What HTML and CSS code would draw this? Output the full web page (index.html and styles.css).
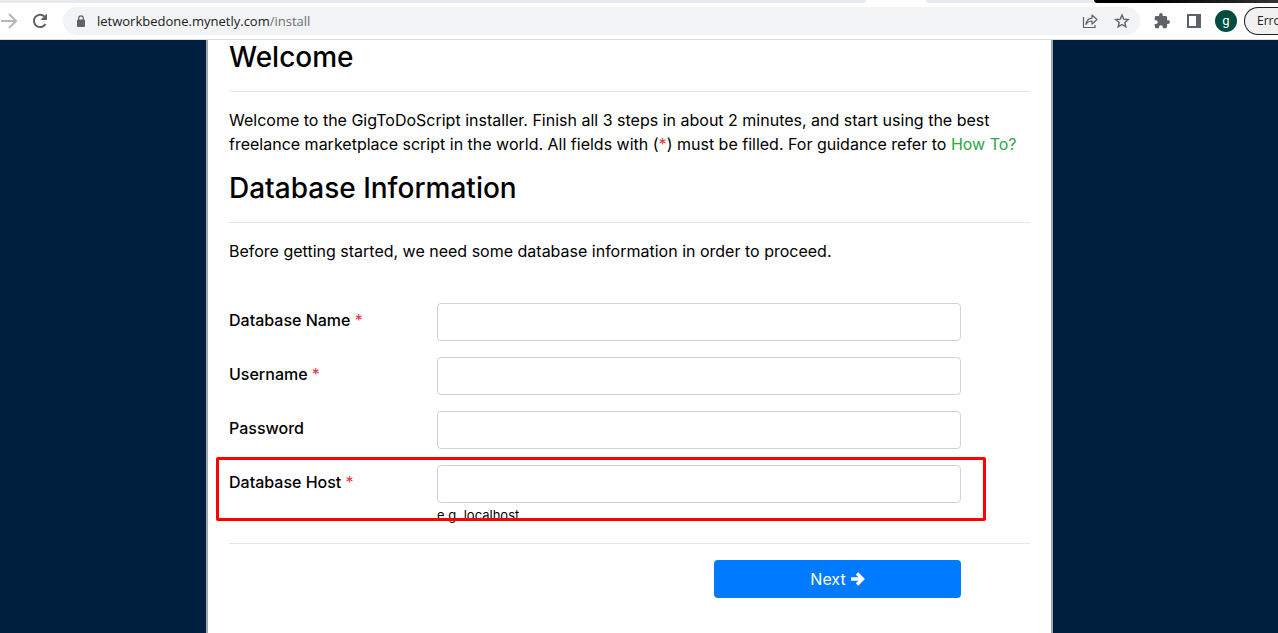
FILE: index.html
```html
<!DOCTYPE html>
<html lang="en">
<head>
<meta charset="utf-8">
<title>Install</title>
<link rel="stylesheet" href="styles.css">
</head>
<body>
<header class="browser">
  <div class="tabs"><span class="tab tab-before"></span><span class="tab tab-active"></span><span class="tab tab-after"></span><span class="tab-backdrop"></span></div>
  <div class="toolbar">
    <button class="icon-btn forward" type="button" aria-label="Forward"><svg width="16" height="16" viewBox="0 0 16 16" fill="none" stroke="#b5b7ba" stroke-width="2"><path d="M0 8h14M8 1l7 7-7 7"/></svg></button>
    <button class="icon-btn reload" type="button" aria-label="Reload"><svg width="16" height="16" viewBox="0 0 16 16"><path d="M13.500 11A6.200 6.200 0 1 1 12.600 3.600" fill="none" stroke="#5f6368" stroke-width="2"/><path d="M15 .5v6.500H8.500z" fill="#5f6368"/></svg></button>
    <div class="address">
      <svg class="lock" width="10" height="13" viewBox="0 0 10 13"><rect x="1" y="4.500" width="8" height="7.500" rx="1" fill="#5f6368"/><path d="M2.700 5V3.200a2.300 2.300 0 0 1 4.600 0V5" fill="none" stroke="#5f6368" stroke-width="1.200"/></svg>
      <a class="url" href="#">letworkbedone.mynetly.com<span class="path">/install</span></a>
      <button class="icon-btn" type="button" aria-label="Share"><svg width="16" height="16" viewBox="0 0 16 16" fill="none" stroke="#5f6368" stroke-width="1.200"><path d="M1.500 4v10.500h11.500V12"/><path d="M4 11.500C4.500 7.500 6.500 5.500 10 5.200V2l5 4.500-5 4.500V8C7.500 8 5.500 9 4 11.500z" stroke-linejoin="round"/></svg></button>
      <button class="icon-btn" type="button" aria-label="Bookmark"><svg width="16" height="16" viewBox="0 0 16 16" fill="none" stroke="#5f6368" stroke-width="1.400"><path d="M8 2l1.700 4.100 4.500.4-3.400 2.900 1 4.400L8 11.500l-3.800 2.300 1-4.400-3.400-2.900 4.500-.4z"/></svg></button>
    </div>
    <button class="icon-btn" type="button" aria-label="Extensions"><svg width="16" height="16" viewBox="1 1 22 22"><path fill="#5f6368" d="M20.500 11H19V7a2 2 0 0 0-2-2h-4V3.500a2.500 2.500 0 0 0-5 0V5H4a2 2 0 0 0-2 2v3.800h1.500a2.700 2.700 0 0 1 0 5.400H2V20a2 2 0 0 0 2 2h3.800v-1.500a2.700 2.700 0 0 1 5.400 0V22H17a2 2 0 0 0 2-2v-4h1.500a2.500 2.500 0 0 0 0-5z"/></svg></button>
    <button class="icon-btn" type="button" aria-label="Side panel"><svg width="14" height="14" viewBox="0 0 14 14"><path fill="#5f6368" fill-rule="evenodd" d="M0 0h14v14H0zM2 2v10h7V2z"/></svg></button>
    <button class="avatar" type="button">g</button>
    <button class="error" type="button">Error</button>
  </div>
</header>
<main class="page">
  <section class="card">
    <h3>Welcome</h3>
    <hr>
    <p>Welcome to the GigToDoScript installer. Finish all 3 steps in about 2 minutes, and start using the best freelance marketplace script in the world. All fields with (<span class="required">*</span>) must be filled. For guidance refer to <a class="how" href="#">How To?</a></p>
    <h3>Database Information</h3>
    <hr>
    <p class="lead">Before getting started, we need some database information in order to proceed.</p>
    <form>
      <div class="row"><label for="name">Database Name <span class="required">*</span></label><input id="name" type="text"></div>
      <div class="row"><label for="user">Username <span class="required">*</span></label><input id="user" type="text"></div>
      <div class="row"><label for="pass">Password</label><input id="pass" type="password"></div>
      <div class="row host"><label for="host">Database Host <span class="required">*</span></label><input id="host" type="text"><small>e.g. localhost</small><span class="highlight"></span></div>
      <hr>
      <div class="actions"><button class="next" type="submit">Next <svg width="14" height="14" viewBox="0 0 14 14"><path d="M0 7h10M6 1.500L11.500 7 6 12.500" fill="none" stroke="#fff" stroke-width="3.400"/></svg></button></div>
    </form>
  </section>
</main>
</body>
</html>
```
FILE: styles.css
```css
* { box-sizing: border-box; }
body {
  margin: 0;
  height: 100vh;
  display: flex;
  flex-direction: column;
  overflow: hidden;
  background: #001f3f;
  color: #000;
  font: 16px/24px Inter, "Liberation Sans", sans-serif;
}
button { font: inherit; border: 0; padding: 0; background: none; }
.browser { flex: none; background: #fff; border-bottom: 1px solid #dadce0; font-family: "Open Sans", "Noto Sans", sans-serif; }
.tabs { display: grid; grid-template-columns: 866fr 60fr 168fr 184fr; height: 3px; background: #fff; }
.tab-before { background: #e8eaed; border-bottom-right-radius: 6px; }
.tab-after { background: #e8eaed; border-bottom-left-radius: 6px; }
.tab-backdrop { background: linear-gradient(90deg, #000 30%, #333); border-bottom-left-radius: 6px; }
.toolbar { height: 36px; display: flex; align-items: center; overflow: hidden; }
.icon-btn { flex: none; display: grid; place-items: center; width: 32px; height: 28px; }
.forward { width: 17px; }
.reload { width: 46px; }
.address { flex: 1; display: flex; align-items: center; height: 28px; padding: 0 2px 0 13px; margin-right: 6px; border-radius: 14px; background: #f1f3f4; }
.url { flex: 1; margin-left: 11px; color: #202124; font-size: 13px; line-height: 20px; text-decoration: none; }
.path { color: #6b6f74; }
.avatar { flex: none; width: 22px; height: 22px; margin: 0 7px 0 5px; border-radius: 50%; background: #004d40; color: #fff; font-family: Roboto, sans-serif; font-size: 13px; line-height: 20px; }
.error { flex: none; width: 34px; height: 28px; padding-left: 12px; border: 1px solid #202124; border-right: 0; border-radius: 14px 0 0 14px; background: #f1f1f1; color: #202124; font-size: 12px; text-align: left; overflow: hidden; }
.page { flex: 1; display: grid; grid-template-columns: 206fr 847fr 225fr; min-height: 0; }
.card { grid-column: 2; padding: 1px 21px 32px; background: #fff; border: 2px solid #a3a8ad; border-width: 0 2px; }
h3 { margin: 0; padding-bottom: 2px; font-size: 28px; line-height: 32px; font-weight: 500; }
hr { margin: 16px 0; border: 0; border-top: 1px solid #e5e5e5; }
p { margin: 0 0 16px; }
.required { color: #dc3545; font-weight: 400; }
.how { color: #28a745; text-decoration: none; }
.lead { margin-bottom: 40px; }
.row { position: relative; display: grid; grid-template-columns: 208fr 524fr 69fr; margin-bottom: 16px; }
.row label { padding-top: 5px; font-weight: 500; }
.row input { width: 100%; height: 38px; padding: 6px 12px; border: 1px solid #ced4da; border-radius: 4px; background: #fff; font: inherit; }
.row small { grid-column: 2; font-size: 13px; line-height: 24px; }
.highlight { position: absolute; top: -8px; left: -13px; right: 44px; height: 64px; border: 3px solid #f00; border-radius: 2px; pointer-events: none; }
.actions { display: grid; grid-template-columns: 485fr 247fr 69fr; }
.next { grid-column: 2; display: flex; align-items: center; justify-content: center; gap: 5px; height: 38px; border-radius: 4px; background: #007bff; color: #fff; }
```
